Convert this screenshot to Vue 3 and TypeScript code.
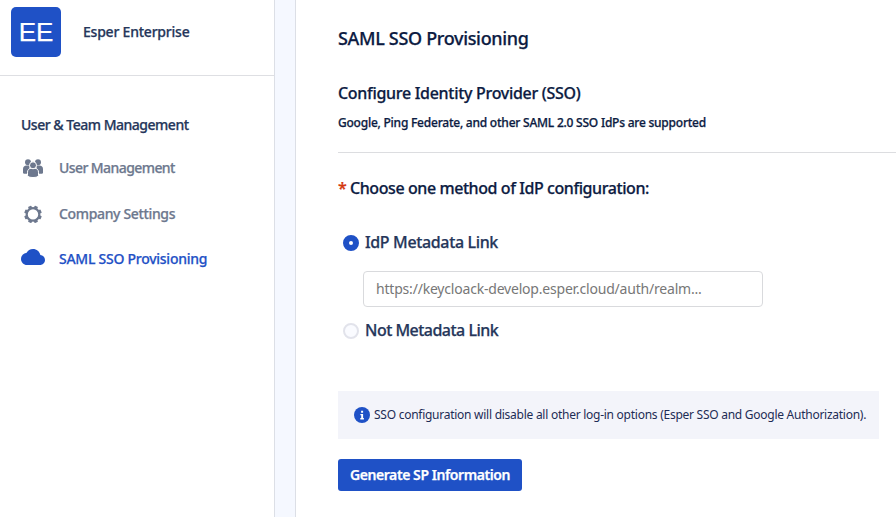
<script setup lang="ts">
import { ref } from 'vue'

type IconName = 'users' | 'gear' | 'cloud'
interface NavItem {
  icon: IconName
  label: string
  key: string
}

const navItems: NavItem[] = [
  { icon: 'users', label: 'User Management', key: 'um' },
  { icon: 'gear', label: 'Company Settings', key: 'cs' },
  { icon: 'cloud', label: 'SAML SSO Provisioning', key: 'sso' },
]
const active = ref('sso')
const method = ref<'link' | 'manual'>('link')
const metadataUrl = ref('')
const teeth = [0, 45, 90, 135, 180, 225, 270, 315]
</script>

<template>
  <div class="page">
    <aside class="sidebar">
      <header class="brand">
        <div class="avatar"><span>EE</span></div>
        <span class="brand-name">Esper Enterprise</span>
      </header>
      <h2 class="section"><span>User &amp; Team Management</span></h2>
      <nav class="nav">
        <a
          v-for="item in navItems"
          :key="item.key"
          class="nav-item"
          :class="[item.key, { active: active === item.key }]"
          @click="active = item.key"
        >
          <svg v-if="item.icon === 'users'" class="icon" viewBox="0 0 24 24">
            <g fill="currentColor">
              <circle cx="7" cy="6.300" r="3" />
              <circle cx="17" cy="6.300" r="3" />
              <path d="M2 16.300v-3.200C2 10.900 3.500 9.600 5.500 9.600h3v8.200H3.200Q2 17.800 2 16.300z" />
              <path d="M22 16.300v-3.200c0-2.200-1.500-3.500-3.500-3.500h-3v8.200h5.300q1.200 0 1.200-1.500z" />
            </g>
            <g fill="currentColor" stroke="#fff" stroke-width="1">
              <path d="M6.500 19.300v-3.100c0-2.400 1.500-3.900 3.900-3.900h3.200c2.400 0 3.900 1.500 3.900 3.900v3.100c0 1.600-2.500 2.200-5.500 2.200s-5.500-.6-5.500-2.200z" />
              <circle cx="12" cy="9.300" r="3.500" />
            </g>
          </svg>
          <svg v-else-if="item.icon === 'gear'" class="icon" viewBox="0 0 24 24">
            <circle cx="12" cy="12.400" r="6.300" fill="none" stroke="currentColor" stroke-width="2.200" />
            <rect
              v-for="angle in teeth"
              :key="angle"
              x="10.200"
              y="3.600"
              width="3.600"
              height="2.600"
              rx="0.600"
              fill="currentColor"
              :transform="`rotate(${angle + 22.5} 12 12.4)`"
            />
          </svg>
          <svg v-else class="icon" viewBox="0 0 24 24">
            <path
              fill="currentColor"
              d="M19.350 10.040C18.670 6.590 15.640 4 12 4 9.110 4 6.600 5.640 5.350 8.040 2.340 8.360 0 10.910 0 14c0 3.310 2.690 6 6 6h13c2.760 0 5-2.240 5-5 0-2.640-2.050-4.780-4.650-4.960z"
            />
          </svg>
          <span>{{ item.label }}</span>
        </a>
      </nav>
    </aside>

    <main class="content">
      <h1 class="title"><span>SAML SSO Provisioning</span></h1>
      <section class="intro">
        <h2><span>Configure Identity Provider (SSO)</span></h2>
        <p><span>Google, Ping Federate, and other SAML 2.0 SSO IdPs are supported</span></p>
      </section>
      <div class="question">
        <span class="star">*</span>
        <span class="question-text">Choose one method of IdP configuration:</span>
      </div>
      <label class="option first">
        <input v-model="method" type="radio" value="link" />
        <span class="option-text idp">IdP Metadata Link</span>
      </label>
      <input
        v-model="metadataUrl"
        class="url"
        type="text"
        placeholder="https://keycloack-develop.esper.cloud/auth/realm..."
      />
      <label class="option">
        <input v-model="method" type="radio" value="manual" />
        <span class="option-text not">Not Metadata Link</span>
      </label>
      <div class="notice">
        <svg viewBox="0 0 16 16">
          <circle cx="8" cy="8" r="8" fill="#1f51c6" />
          <path fill="#fff" d="M7.100 3.800h2v2h-2zM6.400 7h2.700v4.100h.8v1.300H6.300v-1.300h.9V8.300h-.8z" />
        </svg>
        <span>SSO configuration will disable all other log-in options (Esper SSO and Google Authorization).</span>
      </div>
      <button class="generate" type="button"><span>Generate SP Information</span></button>
    </main>
  </div>
</template>

<style>
body {
  margin: 0;
  overflow: hidden;
}
</style>

<style scoped>
.page {
  display: flex;
  gap: 20px;
  width: 896px;
  height: 517px;
  overflow: hidden;
  background: #f5f8ff;
  color: #0c1b42;
  font-family: 'Noto Sans', 'Open Sans', sans-serif;
  font-weight: 500;
  white-space: nowrap;
  -webkit-text-stroke: 0.250px currentColor;
}
h1,
h2,
p {
  margin: 0;
  font-weight: 500;
}
.sidebar {
  box-sizing: border-box;
  flex: 0 0 275px;
  border-right: 1px solid #dcdfe6;
  background: #fff;
  color: #25365a;
  font-size: 14px;
}
.brand {
  box-sizing: border-box;
  display: flex;
  align-items: flex-start;
  gap: 22px;
  height: 76px;
  padding: 7px 0 0 11px;
  border-bottom: 1px solid #dedfe3;
}
.avatar {
  width: 50px;
  height: 50px;
  border-radius: 5px;
  background: #1f51c6;
  color: #fff;
  font-family: 'Liberation Sans', Arial, sans-serif;
  font-size: 26px;
  font-weight: 400;
  line-height: 50px;
  text-align: center;
}
.brand-name {
  letter-spacing: -0.220px;
  line-height: 50px;
}
.section {
  padding: 39px 0 0 21px;
  font-size: 14px;
  letter-spacing: -0.490px;
  line-height: 20px;
}
.nav {
  display: flex;
  flex-direction: column;
  gap: 22px;
  padding: 21px 0 0 21px;
}
.nav-item {
  display: flex;
  align-items: center;
  gap: 14px;
  height: 24px;
  color: #6d788e;
}
.nav-item span {
  padding-bottom: 2px;
}
.nav-item.um {
  letter-spacing: -0.580px;
}
.nav-item.cs {
  letter-spacing: -0.350px;
}
.nav-item.sso {
  letter-spacing: -0.260px;
}
.nav-item.active {
  margin-top: -1px;
  color: #1f51c6;
}
.icon {
  flex: none;
  width: 24px;
  height: 24px;
}
.active .icon {
  margin-top: -4px;
}
.content {
  flex: 1;
  padding-left: 42px;
  border-left: 1px solid #dcdfe6;
  background: #fff;
}
.title {
  padding-top: 26px;
  font-size: 18px;
  letter-spacing: -0.330px;
  line-height: 24px;
}
.intro {
  height: 71px;
  padding-top: 31px;
  border-bottom: 1px solid #dcdde0;
}
.intro h2 {
  font-size: 16px;
  letter-spacing: -0.300px;
  line-height: 24px;
}
.intro p {
  padding-top: 9px;
  font-size: 12px;
  letter-spacing: -0.230px;
  line-height: 18px;
}
.question {
  display: flex;
  padding-top: 23px;
  font-size: 16px;
  line-height: 24px;
}
.question-text {
  letter-spacing: -0.420px;
}
.star {
  width: 12px;
  color: #d4380d;
}
.option {
  display: flex;
  align-items: center;
  gap: 6px;
  height: 24px;
  padding-left: 5px;
  color: #25365a;
  font-size: 16px;
}
.option.first {
  margin-top: 30px;
}
.option-text.idp {
  letter-spacing: -0.360px;
}
.option-text.not {
  letter-spacing: -0.520px;
}
.option input {
  appearance: none;
  box-sizing: border-box;
  width: 16px;
  height: 16px;
  margin: 1px 0 0;
  border: 2px solid #e2e3eb;
  border-radius: 50%;
  background: #fafbff;
}
.option input:checked {
  border: 6px solid #1f51c6;
  background: #fff;
}
.url {
  box-sizing: border-box;
  display: block;
  width: 400px;
  height: 36px;
  margin: 17px 0 11px 25px;
  padding: 0 12px 1px;
  border: 1px solid #d9dadd;
  border-radius: 4px;
  color: #25365a;
  font: 400 14px 'Noto Sans', sans-serif;
  letter-spacing: -0.200px;
  -webkit-text-stroke: 0;
}
.url::placeholder {
  color: #777;
}
.notice {
  box-sizing: border-box;
  display: flex;
  align-items: center;
  gap: 4px;
  width: 541px;
  height: 48px;
  margin-top: 49px;
  padding-left: 16px;
  background: #f3f4fa;
  color: #1d2c55;
  font-size: 12px;
  font-weight: 400;
  letter-spacing: -0.260px;
  -webkit-text-stroke: 0;
}
.notice span {
  padding-bottom: 1px;
}
.notice svg {
  flex: none;
  width: 16px;
  height: 16px;
}
.generate {
  display: block;
  width: 184px;
  height: 32px;
  margin-top: 20px;
  padding: 0 0 0 12px;
  border: 0;
  border-radius: 3px;
  background: #1f51c6;
  color: #fff;
  font: 600 14px/32px 'Noto Sans', sans-serif;
  letter-spacing: -0.430px;
  text-align: left;
}
</style>
